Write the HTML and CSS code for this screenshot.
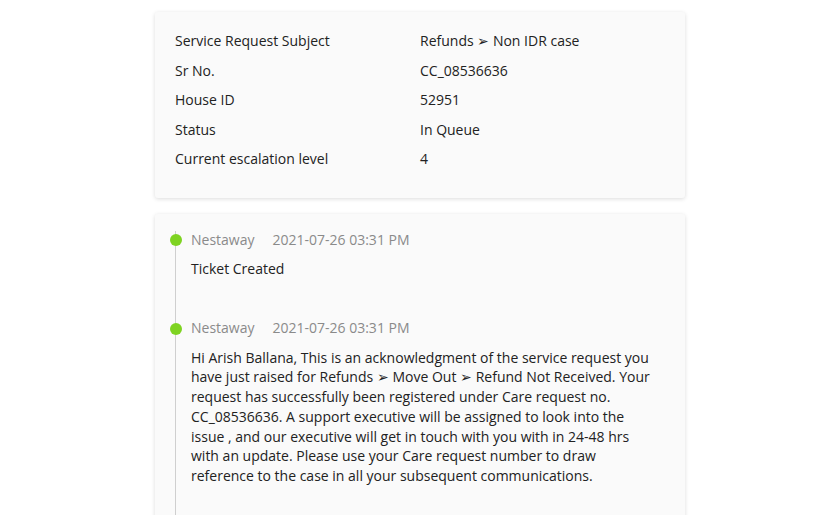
FILE: index.html
```html
<!DOCTYPE html>
<html>
<head>
<meta charset="utf-8">
<link rel="stylesheet" href="styles.css">
</head>
<body>
<div class="page">
  <section class="card details">
    <div class="row"><span class="label">Service Request Subject</span><span class="value">Refunds ➢ Non IDR case</span></div>
    <div class="row"><span class="label">Sr No.</span><span class="value">CC_08536636</span></div>
    <div class="row"><span class="label">House ID</span><span class="value">52951</span></div>
    <div class="row"><span class="label">Status</span><span class="value">In Queue</span></div>
    <div class="row"><span class="label">Current escalation level</span><span class="value">4</span></div>
  </section>
  <section class="card timeline">
    <div class="item">
      <span class="dot"></span>
      <div class="meta"><span class="who">Nestaway</span><span class="when">2021-07-26 03:31 PM</span></div>
      <p class="msg">Ticket Created</p>
    </div>
    <div class="item">
      <span class="dot"></span>
      <div class="meta"><span class="who">Nestaway</span><span class="when">2021-07-26 03:31 PM</span></div>
      <p class="msg">Hi Arish Ballana, This is an acknowledgment of the service request you have just raised for Refunds ➢ Move Out ➢ Refund Not Received. Your request has successfully been registered under Care request no. CC_08536636. A support executive will be assigned to look into the issue , and our executive will get in touch with you with in 24-48 hrs with an update. Please use your Care request number to draw reference to the case in all your subsequent communications.</p>
    </div>
  </section>
</div>
</body>
</html>
```
FILE: styles.css
```css
html, body { margin: 0; padding: 0; background: #fff; }
body { font-family: "Open Sans", sans-serif; font-size: 14px; color: #222; }
.page { width: 530px; margin-left: 155px; padding-top: 12px; display: flex; flex-direction: column; gap: 16px; }
.card { background: #fafafa; border-radius: 3px; box-shadow: 0 1px 4px rgba(0,0,0,0.14); }
.details { padding: 14px 20px 20px; height: 186px; box-sizing: border-box; display: flex; flex-direction: column; }
.row { display: flex; height: 29.5px; align-items: center; }
.label { width: 245px; }
.timeline { padding: 17px 20px 40px; min-height: 400px; }
.item { position: relative; padding-left: 15px; border-left: 1px solid #cfcfcf; padding-bottom: 41px; }
.dot { position: absolute; left: -6.5px; top: 3px; width: 12px; height: 12px; border-radius: 50%; background: #7ed321; }
.meta { height: 16px; display: flex; align-items: center; color: #8a8a8a; }
.who { margin-right: 18px; }
.msg { margin: 12px 0 0; line-height: 19.7px; max-width: 464px; }
```
